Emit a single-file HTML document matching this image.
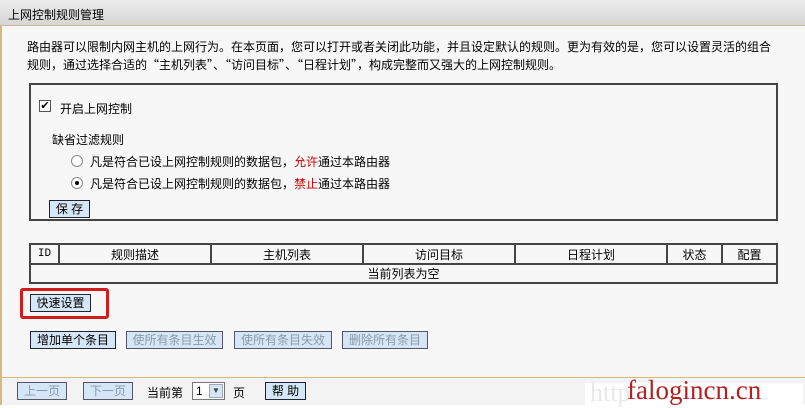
<!DOCTYPE html>
<html><head><meta charset="utf-8"><style>
*{margin:0;padding:0;box-sizing:border-box}
body{width:805px;height:405px;background:#fff;font-family:"Liberation Sans","Noto Sans CJK SC",sans-serif;font-size:12px;color:#000;position:relative;overflow:hidden}
.a{position:absolute;white-space:nowrap}
.title{left:0;top:0;width:805px;height:26px;background:linear-gradient(#ececec,#d6d6d6);border-bottom:1px solid #c8b89a}
.main{left:0;top:26px;width:805px;height:352px;background:#f7f7f7;border-left:2px solid #d9b87c;border-bottom:1px solid #d9b87c}
.foot{left:0;top:378px;width:805px;height:27px;background:#f3f3f3;border-left:2px solid #d9b87c}
.btn{position:absolute;height:18px;background:#d5e6f7;border:1px solid #223;font-size:12px;line-height:16px;text-align:center;white-space:nowrap}
.dis{color:#8a9aa8;border-color:#556}
table{position:absolute;left:29px;top:243px;width:749px;border-collapse:collapse;background:#f7f7f7}
td{border:2px solid #444;height:20px;text-align:center;font-size:12px;padding:0}
.box{left:29px;top:83px;width:749px;height:138px;border:2px solid #444}
</style></head><body>
<div class="a title"></div>
<div class="a" style="left:8px;top:6px;font-size:12px">上网控制规则管理</div>
<div class="a main"></div>
<div class="a foot"></div>
<div class="a" style="left:27px;top:38px;line-height:18px;font-family:'Noto Sans CJK SC',sans-serif">路由器可以限制内网主机的上网行为。在本页面，您可以打开或者关闭此功能，并且设定默认的规则。更为有效的是，您可以设置灵活的组合<br>规则，通过选择合适的“主机列表”、“访问目标”、“日程计划”，构成完整而又强大的上网控制规则。</div>
<div class="a box"></div>
<div class="a" style="left:39px;top:100px;width:12px;height:12px;border:1px solid #555;background:#fff;font-size:11px;line-height:10px;text-align:center">✔</div>
<div class="a" style="left:60px;top:100px">开启上网控制</div>
<div class="a" style="left:52px;top:131px">缺省过滤规则</div>
<div class="a" style="left:71px;top:155px;width:12px;height:12px;border:1px solid #888;border-radius:50%;background:#fff"></div>
<div class="a" style="left:90px;top:153px">凡是符合已设上网控制规则的数据包，<span style="color:#c00">允许</span>通过本路由器</div>
<div class="a" style="left:71px;top:177px;width:12px;height:12px;border:1px solid #888;border-radius:50%;background:#fff"><div style="position:absolute;left:3px;top:3px;width:4px;height:4px;border-radius:50%;background:#000"></div></div>
<div class="a" style="left:90px;top:175px">凡是符合已设上网控制规则的数据包，<span style="color:#c00">禁止</span>通过本路由器</div>
<div class="btn" style="left:49px;top:200px;width:41px">保 存</div>
<table><tr><td style="width:29px;font-family:'Liberation Mono',monospace;font-size:11px">ID</td><td style="width:152px">规则描述</td><td style="width:152px">主机列表</td><td style="width:152px">访问目标</td><td style="width:152px">日程计划</td><td style="width:55px">状态</td><td>配置</td></tr>
<tr><td colspan="7" style="height:19px">当前列表为空</td></tr></table>
<div class="a" style="left:20px;top:288px;width:89px;height:31px;border:3px solid #d21c1c;border-radius:3px"></div>
<div class="btn" style="left:30px;top:294px;width:61px">快速设置</div>
<div class="btn" style="left:30px;top:331px;width:86px">增加单个条目</div>
<div class="btn dis" style="left:126px;top:331px;width:97px">使所有条目生效</div>
<div class="btn dis" style="left:234px;top:331px;width:98px">使所有条目失效</div>
<div class="btn dis" style="left:342px;top:331px;width:86px">删除所有条目</div>
<div class="btn dis" style="left:17px;top:382px;width:50px">上一页</div>
<div class="btn dis" style="left:83px;top:382px;width:50px">下一页</div>
<div class="a" style="left:147px;top:384px">当前第</div>
<div class="a" style="left:192px;top:382px;width:33px;height:18px;border:1px solid #777;background:#fff;font-size:12px;line-height:16px;padding-left:3px">1<span style="position:absolute;right:1px;top:1px;width:14px;height:14px;background:#d8e4f4;border:1px solid #9ab;font-size:8px;line-height:12px;text-align:center;color:#345">▼</span></div>
<div class="a" style="left:233px;top:384px">页</div>
<div class="btn" style="left:265px;top:382px;width:41px">帮 助</div>
<div class="a" style="left:585px;top:383px;width:218px;height:22px;background:#fff"></div>
<div class="a" style="left:590px;top:378px;font-family:'Liberation Serif',serif;font-size:26px;color:#e8e8e8">http</div>
<div class="a" style="left:627px;top:375px;font-family:'Liberation Serif',serif;font-size:27px;color:#b52020">falogincn.cn</div>
</body></html>
